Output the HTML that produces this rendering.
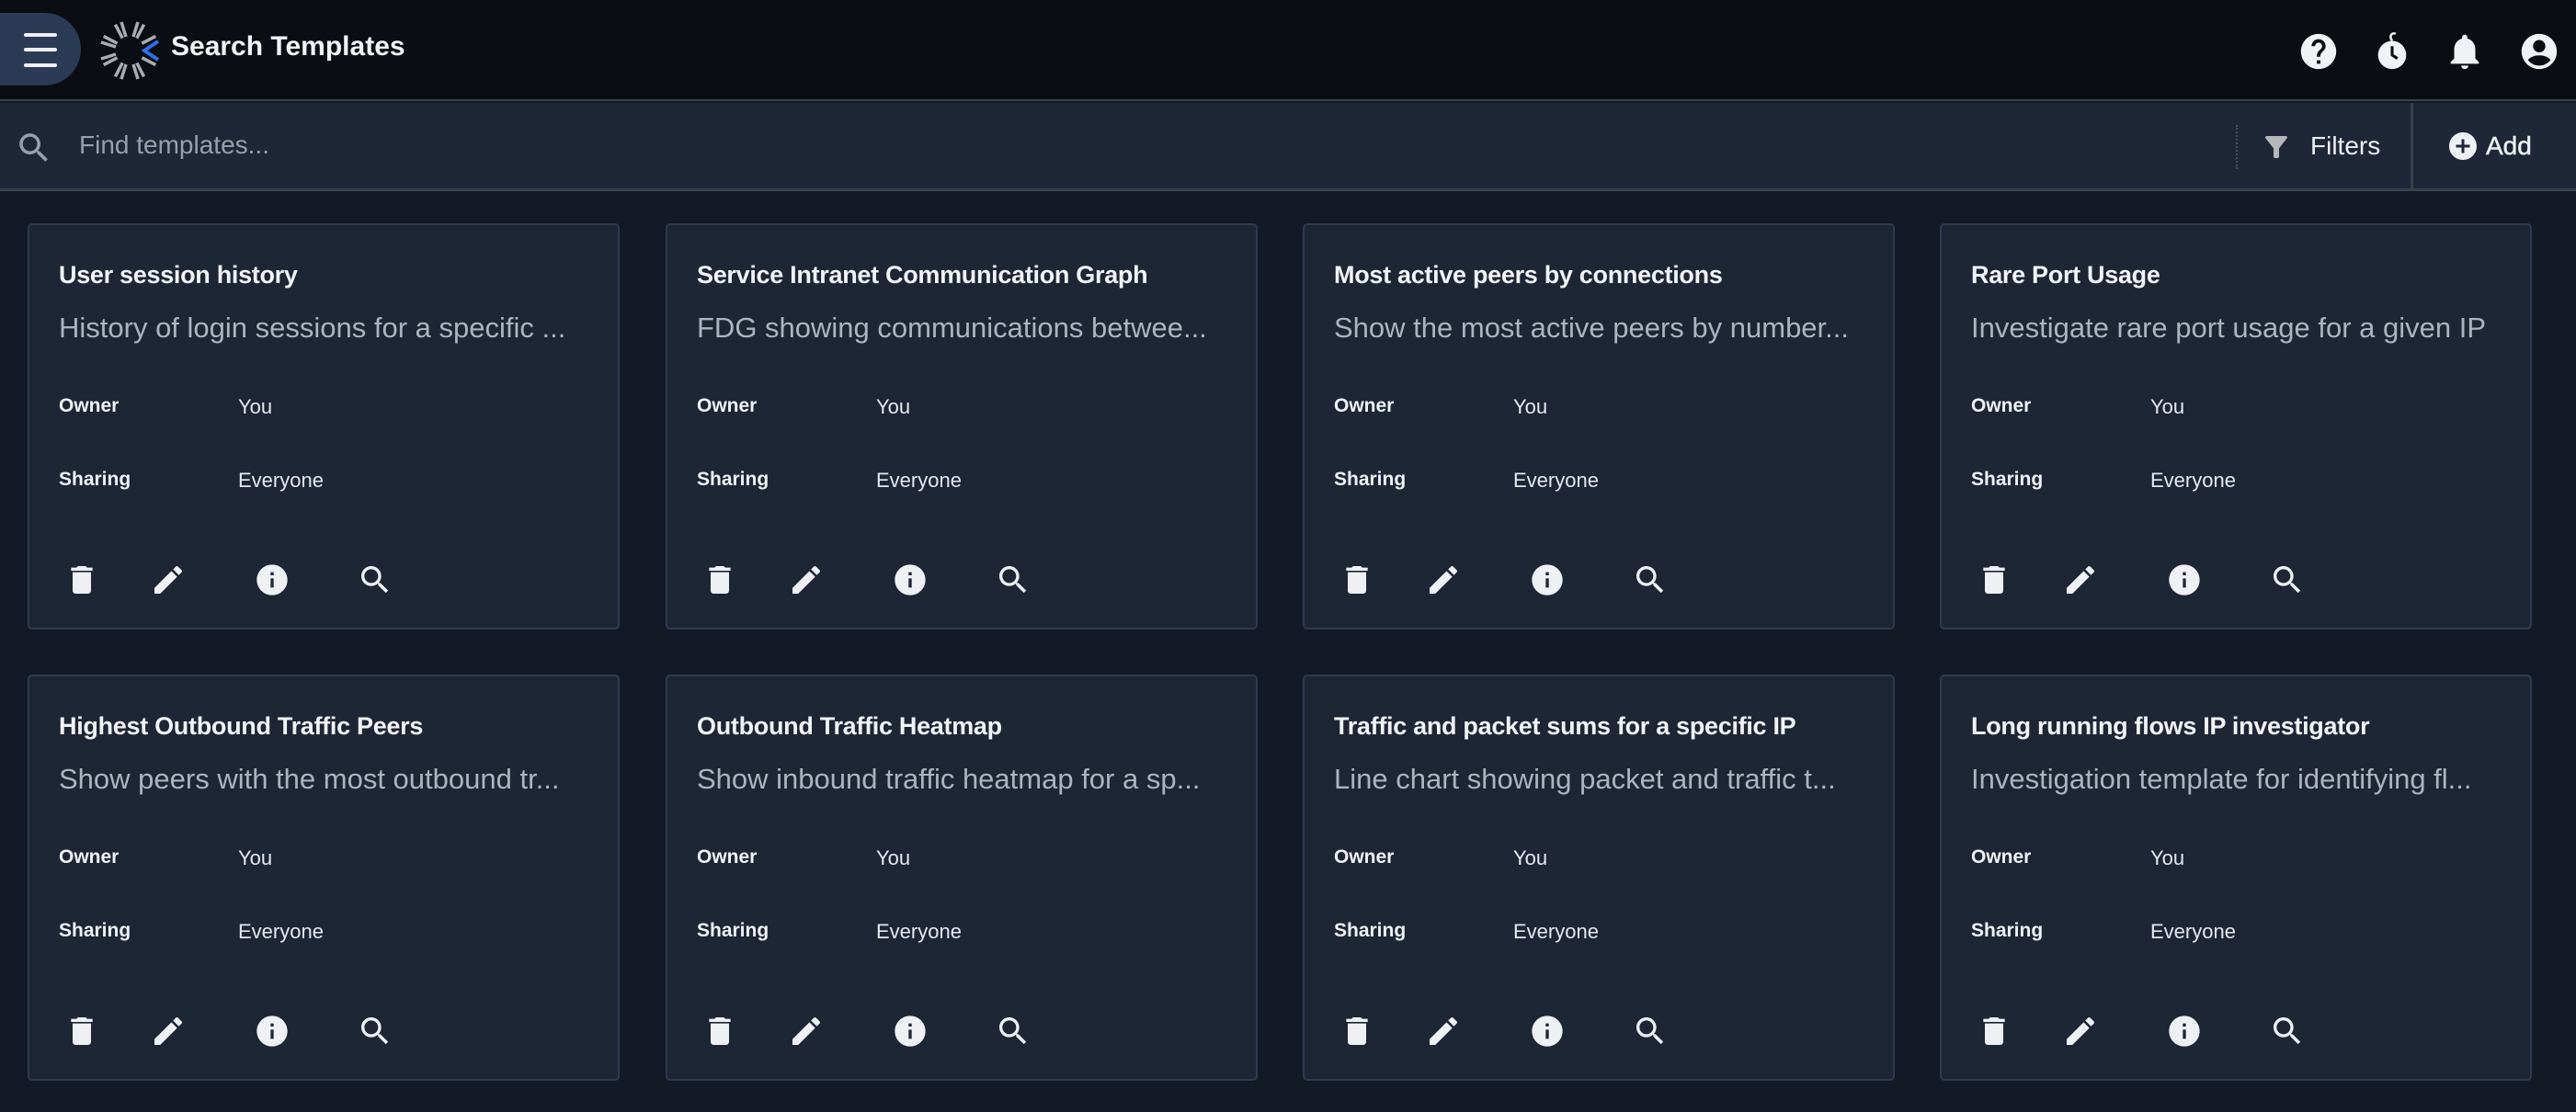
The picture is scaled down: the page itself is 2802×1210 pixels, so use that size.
<!DOCTYPE html>
<html><head><meta charset="utf-8"><style>
*{margin:0;padding:0;box-sizing:border-box}
body{width:2802px;height:1210px;background:#141a25;font-family:"Liberation Sans",Arial,sans-serif;position:relative;overflow:hidden;color:#f0f2f5}
.hdr{position:absolute;left:0;top:0;width:2802px;height:110px;background:#0a0d12;border-bottom:2px solid #3a404a}
.pill{position:absolute;left:0;top:14px;width:88px;height:79px;background:#2b3a55;border-radius:0 40px 40px 0}
.pill i{position:absolute;left:26px;width:36px;height:4px;background:#eef0f4;border-radius:2px}
.title{position:absolute;left:186px;top:34px;font-size:30px;font-weight:bold;color:#f2f3f6}
.bar{position:absolute;left:0;top:112px;width:2802px;height:96px;background:#1f2637;border-bottom:3px solid #3a404a}
.ph{position:absolute;left:86px;top:30px;font-size:28px;color:#9aa0aa}
.card{position:absolute;width:644px;height:442px;background:#1e2535;border:2px solid #2e3a4f;border-radius:5px}
.card .t{position:absolute;left:32px;top:39px;font-size:27px;font-weight:bold;letter-spacing:-0.3px;white-space:nowrap;color:#f2f3f6}
.card .d{position:absolute;left:32px;top:94px;width:590px;height:36px;overflow:hidden;font-size:31px;color:#aeb4bf;white-space:nowrap}
.card .l{position:absolute;left:32px;font-size:21px;font-weight:bold;color:#f0f2f5}
.card .v{position:absolute;left:227px;font-size:22px;color:#e6e9ee}
.card svg{position:absolute;top:366px;width:40px;height:40px;fill:#eef0f4}
.hi{position:absolute;top:33px;width:46px;height:46px;fill:#f0f2f5}
</style></head><body>
<div class="hdr">
 <div class="pill"><i style="top:22px"></i><i style="top:38px"></i><i style="top:55px"></i></div>
 <svg style="position:absolute;left:106px;top:22px" width="70" height="66" viewBox="-35 -33 70 66">
  <g stroke="#a9acb1" stroke-width="3.5" fill="none">
   <path d="M-4 -15 L-9 -31 M4 -15 L9 -31" transform="rotate(0)"/>
   <path d="M-4 -15 L-9 -31 M4 -15 L9 -31" transform="rotate(-45)"/>
   <path d="M-4 -15 L-9 -31 M4 -15 L9 -31" transform="rotate(-90)"/>
   <path d="M-4 -15 L-9 -31 M4 -15 L9 -31" transform="rotate(-135)"/>
   <path d="M-4 -15 L-9 -31 M4 -15 L9 -31" transform="rotate(180)"/>
   <path d="M-4 -15 L-9 -31 M4 -15 L9 -31" transform="rotate(135)"/>
   <path d="M-4 -15 L-9 -31 M4 -15 L9 -31" transform="rotate(45)"/>
  </g>
  <path d="M31 -10 L16 0 L31 10" stroke="#2f6fe8" stroke-width="4" fill="none"/>
 </svg>
 <div class="title">Search Templates</div>
 <svg class="hi" style="left:2499px" viewBox="0 0 24 24"><path d="M12 2C6.48 2 2 6.48 2 12s4.48 10 10 10 10-4.48 10-10S17.52 2 12 2zm1 17h-2v-2h2v2zm2.07-7.75l-.9.92C13.45 12.9 13 13.5 13 15h-2v-.5c0-1.1.45-2.1 1.17-2.83l1.24-1.26c.37-.36.59-.86.59-1.41 0-1.1-.9-2-2-2s-2 .9-2 2H8c0-2.21 1.79-4 4-4s4 1.79 4 4c0 .88-.36 1.68-.93 2.25z"/></svg>
 <svg class="hi" style="left:2579px" viewBox="0 0 24 24"><circle cx="12" cy="14" r="8"/><path d="M12 6 C10 3 12 1 14 2" stroke="#f0f2f5" stroke-width="1.3" fill="none"/><path d="M12 9v5l3 2" stroke="#0a0d12" stroke-width="1.6" fill="none"/></svg>
 <svg class="hi" style="left:2658px" viewBox="0 0 24 24"><path d="M12 22c1.1 0 2-.9 2-2h-4c0 1.1.89 2 2 2zm6-6v-5c0-3.07-1.64-5.64-4.5-6.32V4c0-.83-.67-1.5-1.5-1.5s-1.5.67-1.5 1.5v.68C7.630 5.36 6 7.92 6 11v5l-2 2v1h16v-1l-2-2z"/></svg>
 <svg class="hi" style="left:2739px" viewBox="0 0 24 24"><path d="M12 2C6.48 2 2 6.48 2 12s4.48 10 10 10 10-4.48 10-10S17.52 2 12 2zm0 3.5c1.93 0 3.5 1.57 3.5 3.5S13.93 12.5 12 12.5 8.5 10.93 8.5 9 10.07 5.5 12 5.5zM12 20c-2.6 0-4.9-1.2-6.4-3.2C7 15 9.5 14.2 12 14.2s5 .8 6.4 2.6C16.9 18.8 14.6 20 12 20z"/></svg>
</div>
<div class="bar">
 <svg style="position:absolute;left:16px;top:28px" width="42" height="42" viewBox="0 0 24 24" fill="#9aa0aa"><path d="M15.5 14h-.79l-.28-.27C15.41 12.590 16 11.11 16 9.5 16 5.91 13.09 3 9.5 3S3 5.91 3 9.5 5.91 16 9.5 16c1.61 0 3.09-.59 4.23-1.57l.27.28v.79l5 4.99L20.49 19l-4.99-5zm-6 0C7.01 14 5 11.99 5 9.5S7.01 5 9.5 5 14 7.01 14 9.5 11.99 14 9.5 14z"/></svg>
 <div class="ph">Find templates...</div>
 <div style="position:absolute;left:2432px;top:24px;height:48px;border-left:2px dotted #4a5160"></div>
 <svg style="position:absolute;left:2458px;top:30px" width="36" height="36" viewBox="0 0 24 24" fill="#b5b7bb"><path d="M4.25 5.61C6.27 8.2 10 13 10 13v6c0 .55.45 1 1 1h2c.55 0 1-.45 1-1v-6s3.72-4.8 5.74-7.39A.998.998 0 0 0 18.95 4H5.04c-.83 0-1.3.95-.79 1.61z"/></svg>
 <div style="position:absolute;left:2513px;top:31px;font-size:28px;color:#eef0f4">Filters</div>
 <div style="position:absolute;left:2622px;top:0;height:96px;border-left:3px solid #3a404a"></div>
 <svg style="position:absolute;left:2664px;top:32px" width="30" height="30" viewBox="2 2 20 20" fill="#eef0f4"><path d="M12 2C6.48 2 2 6.48 2 12s4.48 10 10 10 10-4.480 10-10S17.52 2 12 2zm5 11h-4v4h-2v-4H7v-2h4V7h2v4h4v2z"/></svg>
 <div style="position:absolute;left:2704px;top:31px;font-size:28px;color:#eef0f4;-webkit-text-stroke:0.5px #eef0f4">Add</div>
</div>

<div id="cards"></div>
<script>
var data=[
["User session history","History of login sessions for a specific ..."],
["Service Intranet Communication Graph","FDG showing communications betwee..."],
["Most active peers by connections","Show the most active peers by number..."],
["Rare Port Usage","Investigate rare port usage for a given IP"],
["Highest Outbound Traffic Peers","Show peers with the most outbound tr..."],
["Outbound Traffic Heatmap","Show inbound traffic heatmap for a sp..."],
["Traffic and packet sums for a specific IP","Line chart showing packet and traffic t..."],
["Long running flows IP investigator","Investigation template for identifying fl..."]];
var xs=[30,724,1417,2110],ys=[243,734];
var ic=[
'<path d="M6 19c0 1.1.9 2 2 2h8c1.1 0 2-.9 2-2V7H6v12zM19 4h-3.5l-1-1h-5l-1 1H5v2h14V4z"/>',
'<path d="M3 17.25V21h3.75L17.81 9.94l-3.75-3.75L3 17.25zM20.71 7.04c.39-.39.39-1.02 0-1.41l-2.34-2.34c-.39-.39-1.02-.39-1.41 0l-1.83 1.83 3.75 3.75 1.83-1.83z"/>',
'<path d="M12 2C6.48 2 2 6.48 2 12s4.48 10 10 10 10-4.48 10-10S17.52 2 12 2zm1 15h-2v-6h2v6zm0-8h-2V7h2v2z"/>',
'<path d="M15.5 14h-.79l-.28-.27C15.41 12.59 16 11.11 16 9.5 16 5.91 13.09 3 9.5 3S3 5.91 3 9.5 5.91 16 9.5 16c1.61 0 3.09-.59 4.23-1.57l.27.28v.79l5 4.99L20.49 19l-4.99-5zm-6 0C7.01 14 5 11.99 5 9.5S7.01 5 9.5 5 14 7.01 14 9.5 11.99 14 9.5 14z"/>'];
var ix=[37,131,244,356],h='';
data.forEach(function(d,i){
 h+='<div class="card" style="left:'+xs[i%4]+'px;top:'+ys[Math.floor(i/4)]+'px"><div class="t">'+d[0]+'</div><div class="d">'+d[1]+'</div>'+
 '<div class="l" style="top:185px">Owner</div><div class="v" style="top:185px">You</div>'+
 '<div class="l" style="top:265px">Sharing</div><div class="v" style="top:265px">Everyone</div>';
 ic.forEach(function(p,k){h+='<svg viewBox="0 0 24 24" style="left:'+ix[k]+'px">'+p+'</svg>';});
 h+='</div>';
});
document.getElementById('cards').innerHTML=h;
</script>
</body></html>
